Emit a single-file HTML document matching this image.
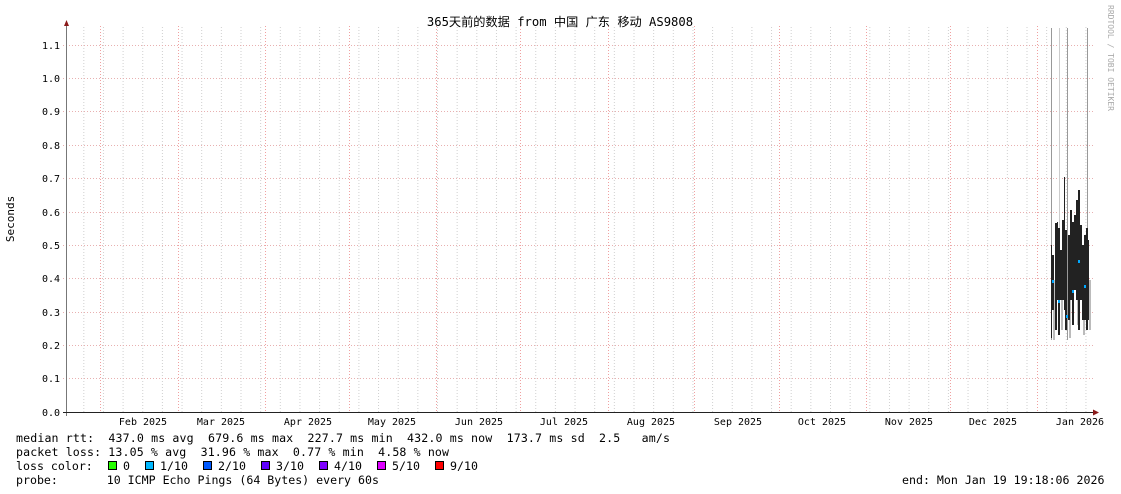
<!DOCTYPE html>
<html><head><meta charset="utf-8"><style>
html,body{margin:0;padding:0;background:#fff;width:1121px;height:494px;overflow:hidden}
svg{display:block}
text{font-family:"DejaVu Sans Mono","Liberation Mono","Noto Sans CJK SC",monospace;fill:#000;white-space:pre}
</style></head><body>
<svg width="1121" height="494" xmlns="http://www.w3.org/2000/svg">
<defs>
<pattern id="wk" x="83.3" y="0" width="19.65" height="494" patternUnits="userSpaceOnUse">
<line x1="0.5" y1="0" x2="0.5" y2="494" stroke="#cfcfcf" stroke-width="1" stroke-dasharray="1,2"/>
</pattern>
</defs>
<rect x="67" y="26" width="1026" height="386" fill="url(#wk)"/>
<g stroke="#f0a0a0" stroke-width="1" stroke-dasharray="1,2">
<line x1="100.5" y1="26" x2="100.5" y2="412"/>
<line x1="178.5" y1="26" x2="178.5" y2="412"/>
<line x1="265.5" y1="26" x2="265.5" y2="412"/>
<line x1="349.5" y1="26" x2="349.5" y2="412"/>
<line x1="436.5" y1="26" x2="436.5" y2="412"/>
<line x1="520.5" y1="26" x2="520.5" y2="412"/>
<line x1="608.5" y1="26" x2="608.5" y2="412"/>
<line x1="694.5" y1="26" x2="694.5" y2="412"/>
<line x1="779.5" y1="26" x2="779.5" y2="412"/>
<line x1="866.5" y1="26" x2="866.5" y2="412"/>
<line x1="950.5" y1="26" x2="950.5" y2="412"/>
<line x1="1037.5" y1="26" x2="1037.5" y2="412"/>
</g>
<g stroke="#e8b0b0" stroke-width="1" stroke-dasharray="1,2">
<line x1="63" y1="45.5" x2="1093" y2="45.5"/>
<line x1="63" y1="78.5" x2="1093" y2="78.5"/>
<line x1="63" y1="111.5" x2="1093" y2="111.5"/>
<line x1="63" y1="145.5" x2="1093" y2="145.5"/>
<line x1="63" y1="178.5" x2="1093" y2="178.5"/>
<line x1="63" y1="212.5" x2="1093" y2="212.5"/>
<line x1="63" y1="245.5" x2="1093" y2="245.5"/>
<line x1="63" y1="278.5" x2="1093" y2="278.5"/>
<line x1="63" y1="312.5" x2="1093" y2="312.5"/>
<line x1="63" y1="345.5" x2="1093" y2="345.5"/>
<line x1="63" y1="378.5" x2="1093" y2="378.5"/>
</g>
<g stroke="#999" stroke-width="1">
<line x1="1051.5" y1="28" x2="1051.5" y2="340"/>
<line x1="1067.5" y1="28" x2="1067.5" y2="340"/>
<line x1="1087.5" y1="28" x2="1087.5" y2="330"/>
</g>
<g stroke="#ccc"><line x1="1059.5" y1="28" x2="1059.5" y2="330"/></g>
<g fill="#bbb">
<rect x="1053" y="280" width="2" height="60"/><rect x="1061" y="300" width="2" height="30"/>
<rect x="1069" y="290" width="2" height="48"/><rect x="1077" y="300" width="2" height="25"/>
<rect x="1083" y="300" width="2" height="35"/><rect x="1089" y="280" width="2" height="50"/>
</g>
<g fill="#222">
<rect x="1051" y="245" width="1" height="93"/><rect x="1052" y="255" width="2" height="55"/>
<rect x="1055" y="223" width="2" height="107"/><rect x="1057" y="222" width="1" height="78"/>
<rect x="1058" y="228" width="2" height="107"/><rect x="1060" y="250" width="2" height="50"/>
<rect x="1062" y="220" width="2" height="80"/><rect x="1064" y="177" width="1" height="133"/>
<rect x="1065" y="230" width="2" height="100"/><rect x="1068" y="235" width="2" height="85"/>
<rect x="1070" y="210" width="2" height="90"/><rect x="1072" y="222" width="2" height="103"/>
<rect x="1074" y="215" width="2" height="75"/><rect x="1076" y="200" width="2" height="100"/>
<rect x="1078" y="190" width="2" height="140"/><rect x="1080" y="225" width="2" height="75"/>
<rect x="1082" y="245" width="2" height="75"/><rect x="1084" y="235" width="2" height="85"/>
<rect x="1086" y="228" width="2" height="102"/><rect x="1088" y="240" width="1" height="80"/>
</g>
<g fill="#00a8ff">
<rect x="1052" y="280" width="2" height="3"/><rect x="1058" y="300" width="2" height="3"/>
<rect x="1066" y="315" width="2" height="3"/><rect x="1072" y="290" width="2" height="3"/>
<rect x="1078" y="260" width="2" height="3"/><rect x="1084" y="285" width="2" height="3"/>
</g>
<line x1="66.5" y1="24" x2="66.5" y2="416" stroke="#777"/>
<line x1="63" y1="412.5" x2="1095" y2="412.5" stroke="#222"/>
<polygon points="64,26 69,26 66.5,20" fill="#8b1a1a"/>
<polygon points="1093,409.5 1093,415.5 1099,412.5" fill="#8b1a1a"/>
<g font-size="10" text-anchor="end">
<text x="60" y="49">1.1</text><text x="60" y="82">1.0</text><text x="60" y="115">0.9</text>
<text x="60" y="149">0.8</text><text x="60" y="182">0.7</text><text x="60" y="216">0.6</text>
<text x="60" y="249">0.5</text><text x="60" y="282">0.4</text><text x="60" y="316">0.3</text>
<text x="60" y="349">0.2</text><text x="60" y="382">0.1</text><text x="60" y="416">0.0</text>
</g>
<g font-size="10" text-anchor="middle">
<text x="143" y="425">Feb 2025</text><text x="221" y="425">Mar 2025</text><text x="308" y="425">Apr 2025</text>
<text x="392" y="425">May 2025</text><text x="479" y="425">Jun 2025</text><text x="564" y="425">Jul 2025</text>
<text x="651" y="425">Aug 2025</text><text x="738" y="425">Sep 2025</text><text x="822" y="425">Oct 2025</text>
<text x="909" y="425">Nov 2025</text><text x="993" y="425">Dec 2025</text><text x="1080" y="425">Jan 2026</text>
</g>
<text x="560" y="26" font-size="12.2" text-anchor="middle">365天前的数据 from 中国 广东 移动 AS9808</text>
<text transform="translate(14,219) rotate(-90)" font-size="11" text-anchor="middle">Seconds</text>
<text transform="translate(1108,5) rotate(90)" font-size="8" style="fill:#aaa">RRDTOOL / TOBI OETIKER</text>
<g font-size="11.6">
<text x="16" y="442" textLength="654" lengthAdjust="spacing">median rtt:  437.0 ms avg  679.6 ms max  227.7 ms min  432.0 ms now  173.7 ms sd  2.5   am/s</text>
<text x="16" y="456" textLength="433" lengthAdjust="spacing">packet loss: 13.05 % avg  31.96 % max  0.77 % min  4.58 % now</text>
<text x="16" y="470">loss color:</text>
<text x="16" y="484">probe:       10 ICMP Echo Pings (64 Bytes) every 60s</text>
<text x="902" y="484">end: Mon Jan 19 19:18:06 2026</text>
<text x="123" y="470">0</text><text x="160" y="470">1/10</text><text x="218" y="470">2/10</text>
<text x="276" y="470">3/10</text><text x="334" y="470">4/10</text><text x="392" y="470">5/10</text><text x="450" y="470">9/10</text>
</g>
<g stroke="#000" stroke-width="1">
<rect x="108.5" y="461.5" width="8" height="8" fill="#26ff00"/>
<rect x="145.5" y="461.5" width="8" height="8" fill="#00b8ff"/>
<rect x="203.5" y="461.5" width="8" height="8" fill="#0059ff"/>
<rect x="261.5" y="461.5" width="8" height="8" fill="#5e00ff"/>
<rect x="319.5" y="461.5" width="8" height="8" fill="#7e00ff"/>
<rect x="377.5" y="461.5" width="8" height="8" fill="#dd00ff"/>
<rect x="435.5" y="461.5" width="8" height="8" fill="#ff0000"/>
</g>
</svg>
</body></html>
